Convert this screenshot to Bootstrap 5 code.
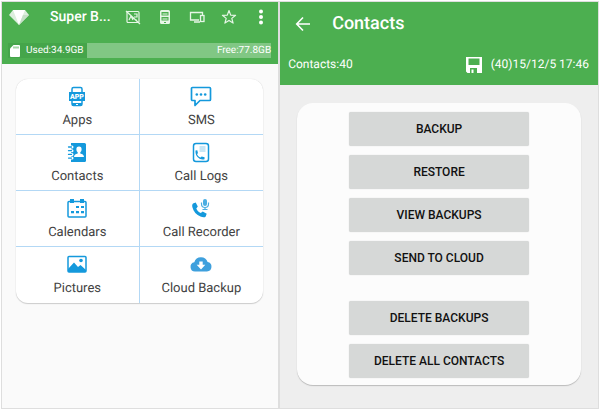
<!DOCTYPE html>
<html lang="en">
<head>
<meta charset="utf-8">
<meta name="viewport" content="width=device-width, initial-scale=1">
<title>Super Backup</title>
<link href="https://cdn.jsdelivr.net/npm/bootstrap@5.3.0/dist/css/bootstrap.min.css" rel="stylesheet">
<style>
  body { font-family: Roboto, "Liberation Sans", sans-serif; background: #fff; text-rendering: geometricPrecision; }
  svg { display: block; flex: none; }
  .screens { min-height: 100vh; padding: 1px; }
  .screen { min-width: 0; border: 1px solid #dedede; }
  .screen-home { flex: 278 1 0; background: #fafafa; }
  .screen-contacts { flex: 320 1 0; background: #eee; }
  .green-bar { background: #4caf50; color: #fff; }
  .home-head { padding: 0 7px 6px 6px; }
  .title-row { height: 30px; }
  .home-head .title-row { margin-bottom: 11px; }
  .home-title { font-size: 14px; font-weight: 500; line-height: 20px; margin-left: 20px; }
  .tool { padding: 0; border: 0; background: none; color: #e6f6e6; width: 20px; height: 24px; display: flex; align-items: center; justify-content: center; }
  .storage { height: 15px; font-size: 10px; line-height: 15px; background: #45a54a; }
  .storage-used { flex: 78 1 0; white-space: nowrap; padding-left: 2px; gap: 6px; }
  .storage-free { flex: 186 1 0; background: #81c784; text-align: right; }
  .menu-card { margin: 15px 15px 15px 14px; background: #fff; border-radius: 12px; box-shadow: 0 1px 1px #ccc, 0 0 1px #ccc; overflow: hidden; }
  .menu-tile { height: 56px; padding-top: 7px; color: #424242; font-size: 13px; line-height: 20px; text-decoration: none; border-bottom: 1px solid #b3d8f5; }
  .menu-tile:nth-child(odd) { border-right: 1px solid #b3d8f5; }
  .menu-tile:nth-last-child(-n+2) { border-bottom: 0; }
  .menu-tile svg { color: #1499dc; margin-bottom: 4px; }
  .contacts-head { padding: 7px 9px 7px 8px; }
  .contacts-head .title-row { padding-left: 5px; margin-bottom: 12px; }
  .contacts-title { font-size: 18px; font-weight: 500; line-height: 24px; margin-left: 19px; }
  .status-row { font-size: 12px; line-height: 27px; }
  .actions { margin: 18px 17px; padding: 9px 0 7px; gap: 9px; background: #fcfcfc; border-radius: 16px; box-shadow: 0 1px 1px #bbb; }
  .action { width: 180px; height: 34px; padding: 0; border: 0; border-radius: 2px; background: #d6d8d7; color: #111; font-size: 12px; font-weight: 500; line-height: 20px; box-shadow: 0 0 1px #ccc; }
  .action-gap { margin-top: 17px; }
</style>
</head>
<body>
<main class="screens d-flex">
  <section class="screen screen-home">
    <header class="green-bar home-head">
      <div class="title-row d-flex align-items-center">
        <svg width="22" height="18" viewBox="0 0 22 18"><path fill="#dceedd" d="M5 2h12l4 5-10 10L1 7z"/><path fill="#fff" d="M5 2h12l-2 5H7zM7 7h8l-4 10z"/><path fill="#c5dfc6" d="M15 7h6L11 17z"/></svg>
        <h1 class="home-title mb-0 me-auto">Super B...</h1>
        <div class="d-flex gap-2 me-n1">
          <button class="tool me-1" type="button" aria-label="Hide ads"><svg width="16" height="16" viewBox="0 0 16 16" fill="none" stroke="currentColor" stroke-width="1.2"><rect x="2" y="2.500" width="12" height="11" rx="1"/><path d="M1 2l14 13M4 11l2-4 2 4M9 5h3v3H9M10 11h2"/></svg></button>
          <button class="tool me-1" type="button" aria-label="Phone"><svg width="16" height="16" viewBox="0 0 16 16"><path fill="currentColor" fill-rule="evenodd" d="M4.500 1h7Q13 1 13 2.500v11q0 1.500-1.500 1.500h-7Q3 15 3 13.500v-11Q3 1 4.500 1zM4.500 3v3.500h7V3zm0 5v3.500h7V8zM7 13v1h2v-1z"/><path stroke="currentColor" d="M5.500 5h5M5.500 10h5"/></svg></button>
          <button class="tool me-1" type="button" aria-label="Devices"><svg width="16" height="14" viewBox="0 0 16 14" fill="none" stroke="currentColor" stroke-width="1.300"><path d="M10 10H1.500V2.500h12V5M5 12h6"/><rect x="11.500" y="5.500" width="3.500" height="6"/></svg></button>
          <button class="tool me-1" type="button" aria-label="Rate"><svg width="16" height="16" viewBox="0 0 16 16" fill="none" stroke="currentColor" stroke-width="1.200" stroke-linejoin="round"><path d="M8 1.500l1.700 4.600 4.900.2-3.800 3.100 1.300 4.700L8 11.400l-4.100 2.700 1.300-4.700L1.400 6.300l4.900-.2z"/></svg></button>
          <button class="tool" type="button" aria-label="More"><svg width="6" height="16" viewBox="0 0 6 16" fill="#fff"><circle cx="3" cy="2.500" r="2"/><circle cx="3" cy="8" r="2"/><circle cx="3" cy="13.500" r="2"/></svg></button>
        </div>
      </div>
      <div class="storage d-flex">
        <div class="storage-used d-flex align-items-center"><svg width="10" height="12" viewBox="0 0 10 12"><path fill="#fff" d="M3.500 0H9q1 0 1 1v10q0 1-1 1H1q-1 0-1-1V3.500z"/><path stroke="#4caf50" d="M4 1.500v2M6 1.500v2M8 1.500v2"/></svg><span>Used:34.9GB</span></div>
        <div class="storage-free">Free:77.8GB</div>
      </div>
    </header>
    <nav class="menu-card row row-cols-2 g-0" aria-label="Backup types">
      <a class="menu-tile d-flex flex-column align-items-center" href="#apps"><svg width="20" height="21" viewBox="0 0 20 21"><path fill="none" stroke="currentColor" stroke-width="1.500" d="M5 6V3q0-1.500 1.500-1.500h7Q15 1.500 15 3v3M5 15v3q0 1.500 1.500 1.500h7Q15 19.500 15 18v-3"/><path fill="currentColor" d="M2 6h16v9H2zM5 17h10v2.500H5z"/><text x="10" y="13" text-anchor="middle" font-size="7" font-weight="900" fill="#fff">APP</text><path stroke="#fff" d="M9 18.500h2"/></svg>Apps</a>
      <a class="menu-tile d-flex flex-column align-items-center" href="#sms"><svg width="22" height="21" viewBox="0 0 22 21"><path fill="none" stroke="currentColor" stroke-width="1.700" stroke-linejoin="round" d="M2.500 1.500h17q1 0 1 1v11q0 1-1 1H10L5 19.500v-5H2.500q-1 0-1-1v-11q0-1 1-1z"/><g fill="currentColor"><circle cx="6.800" cy="8.500" r="1.300"/><circle cx="11" cy="8.500" r="1.300"/><circle cx="15.200" cy="8.500" r="1.300"/></g></svg>SMS</a>
      <a class="menu-tile d-flex flex-column align-items-center" href="#contacts"><svg width="20" height="21" viewBox="0 0 20 21"><path fill="currentColor" d="M4 1h13.500q1.500 0 1.500 1.500v16q0 1.500-1.500 1.500H4z"/><path stroke="#fff" stroke-width="3" stroke-linecap="round" d="M3 5h2M3 8.700h2M3 12.400h2M3 16.100h2"/><path stroke="currentColor" stroke-width="1.300" stroke-linecap="round" d="M1.500 5h3M1.500 8.700h3M1.500 12.400h3M1.500 16.100h3"/><path fill="#fff" d="M12 4.500c1.900 0 2.700 1.300 2.600 3-.1 1.300-.6 2.200-1.300 2.800v1.200c2 .5 3.500 1 3.700 3.500H7c.2-2.500 1.700-3 3.700-3.500v-1.200c-.7-.6-1.200-1.500-1.300-2.800-.1-1.700.7-3 2.600-3z"/></svg>Contacts</a>
      <a class="menu-tile d-flex flex-column align-items-center" href="#call-logs"><svg width="20" height="21" viewBox="0 0 20 21"><rect x="2.500" y="1.500" width="15" height="18" rx="2.500" fill="none" stroke="currentColor" stroke-width="1.500"/><path stroke="#92cdec" stroke-width="1.200" d="M8.500 5h6M8.500 7h6M8.500 9h6"/><path fill="currentColor" d="M4.500 8.500l1.800-.3.700 3-1 .8c.7 1.800 1.800 3 3.600 3.600l1-1.100 3 .8-.1 1.900c-5 1.400-9.600-3.300-9-8.700z"/></svg>Call Logs</a>
      <a class="menu-tile d-flex flex-column align-items-center" href="#calendars"><svg width="20" height="21" viewBox="0 0 20 21"><rect x="1" y="3.500" width="18" height="15.500" rx="1" fill="none" stroke="currentColor" stroke-width="1.500"/><path fill="currentColor" d="M3 1h4v4H3zM13 1h4v4h-4zM9 8h3v2H9zM14 8h3v2h-3zM4 13h3v2.200H4zM9 13h3v2.200H9zM14 13h3v2.200h-3z"/></svg>Calendars</a>
      <a class="menu-tile d-flex flex-column align-items-center" href="#call-recorder"><svg width="20" height="21" viewBox="0 0 20 21"><path fill="currentColor" d="M2 5.500l2.700-.9 2.100 4-1.500 1.900c.9 2.100 2.300 3.500 4.500 4.500l1.900-1.500 4 2.200-1 2.800c-.7 1.100-3 1.100-5.200.1C5.500 16.900 2.400 13.500 1.400 9.200 1 7.500 1.200 6.200 2 5.500z"/><rect x="12" y="1" width="4" height="7" rx="2" fill="#4aaee2"/><path fill="none" stroke="#4aaee2" stroke-width="1.200" d="M10.500 4.500V6q0 3.500 3.500 3.500T17.500 6V4.500M14 9.500v2M11.500 11.500h5"/></svg>Call Recorder</a>
      <a class="menu-tile d-flex flex-column align-items-center" href="#pictures"><svg width="20" height="21" viewBox="0 0 20 21"><rect x="1" y="2.500" width="18" height="15.500" rx="1" fill="none" stroke="currentColor" stroke-width="1.500"/><path fill="currentColor" d="M1 15l6-6.500 4 4.500 2.500-2L19 16v2H1z"/><circle cx="14" cy="6.500" r="1.800" fill="currentColor"/></svg>Pictures</a>
      <a class="menu-tile d-flex flex-column align-items-center" href="#cloud-backup"><svg width="22" height="21" viewBox="0 0 22 21"><path fill="#3ea0dd" d="M5 17.500a4.700 4.700 0 0 1-.7-9.300A7 7 0 0 1 17.600 8 4.800 4.800 0 0 1 17 17.500z"/><path fill="#fff" d="M9.300 7.500h3.400v3.300h2.600L11 15.500l-4.300-4.700h2.600z"/></svg>Cloud Backup</a>
    </nav>
  </section>

  <section class="screen screen-contacts">
    <header class="green-bar contacts-head">
      <div class="title-row d-flex align-items-center">
        <button class="tool" type="button" aria-label="Back"><svg width="16" height="16" viewBox="0 0 16 16" fill="none" stroke="#fff" stroke-width="1.600"><path d="M15 8H2M8 1.500L1.700 8 8 14.500"/></svg></button>
        <h2 class="contacts-title mb-0">Contacts</h2>
      </div>
      <div class="status-row d-flex align-items-center">
        <span class="me-auto">Contacts:40</span>
        <svg width="18" height="18" viewBox="0 0 18 18"><path fill="#fff" fill-rule="evenodd" d="M1 1h16v16H2.500L1 15.500zM3.500 2.500v6.500h11V2.500zM5 12v5h7v-5zm1.500 1.500h2V17h-2z"/></svg>
        <span class="ms-2">(40)15/12/5 17:46</span>
      </div>
    </header>
    <div class="actions d-flex flex-column align-items-center">
      <button class="action btn" type="button">BACKUP</button>
      <button class="action btn" type="button">RESTORE</button>
      <button class="action btn" type="button">VIEW BACKUPS</button>
      <button class="action btn" type="button">SEND TO CLOUD</button>
      <button class="action action-gap btn" type="button">DELETE BACKUPS</button>
      <button class="action btn" type="button">DELETE ALL CONTACTS</button>
    </div>
  </section>
</main>
<script src="https://cdn.jsdelivr.net/npm/bootstrap@5.3.0/dist/js/bootstrap.bundle.min.js"></script>
</body>
</html>
